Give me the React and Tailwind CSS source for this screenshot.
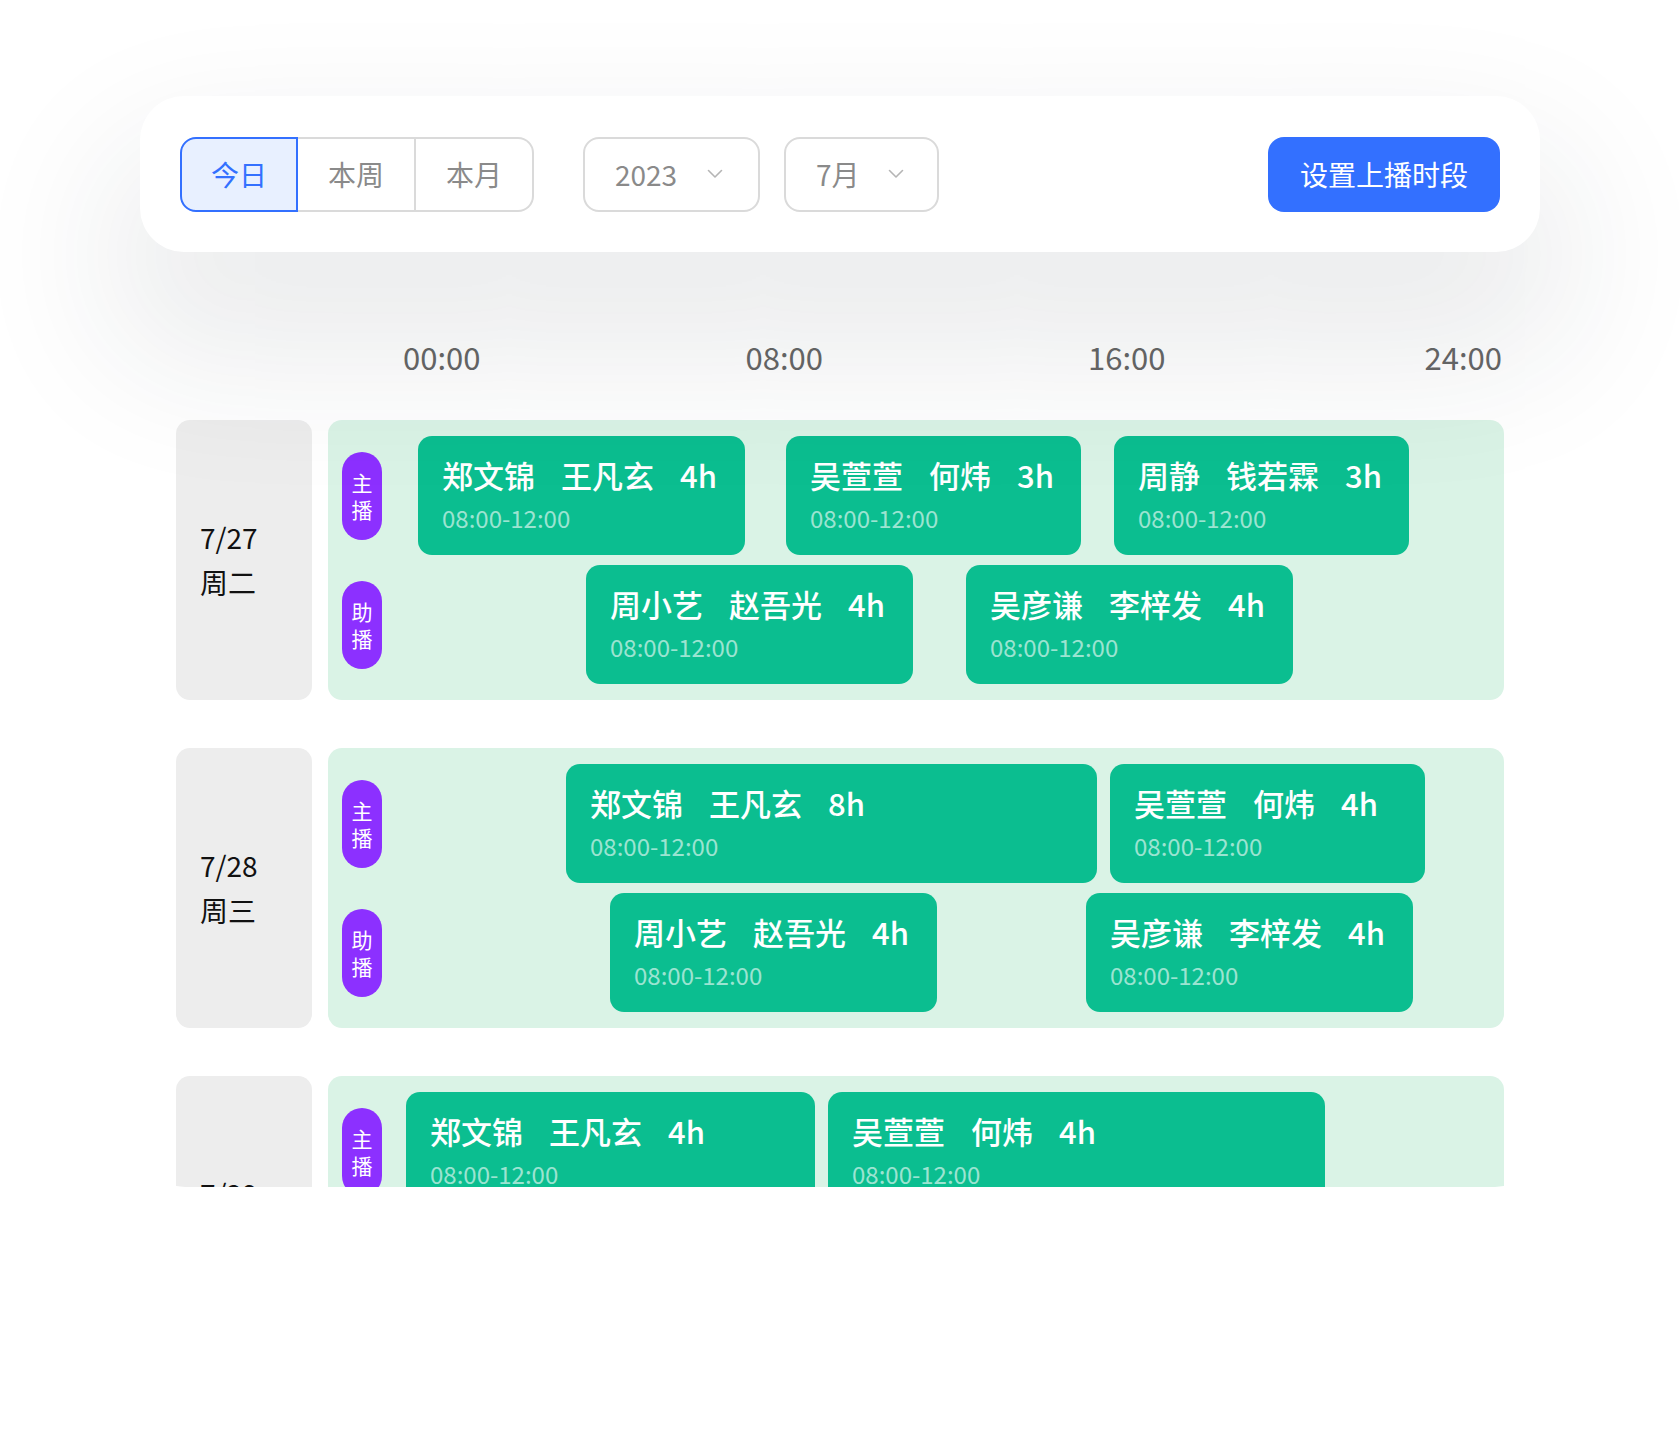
import React from 'react'

const days = [
  {
    date: '7/27',
    week: '周二',
    lanes: [
      {
        role: '主播',
        items: [
          { left: 90, width: 327, names: ['郑文锦', '王凡玄'], hours: '4h' },
          { left: 458, width: 295, names: ['吴萱萱', '何炜'], hours: '3h' },
          { left: 786, width: 295, names: ['周静', '钱若霖'], hours: '3h' },
        ],
      },
      {
        role: '助播',
        items: [
          { left: 258, width: 327, names: ['周小艺', '赵吾光'], hours: '4h' },
          { left: 638, width: 327, names: ['吴彦谦', '李梓发'], hours: '4h' },
        ],
      },
    ],
  },
  {
    date: '7/28',
    week: '周三',
    lanes: [
      {
        role: '主播',
        items: [
          { left: 238, width: 531, names: ['郑文锦', '王凡玄'], hours: '8h' },
          { left: 782, width: 315, names: ['吴萱萱', '何炜'], hours: '4h' },
        ],
      },
      {
        role: '助播',
        items: [
          { left: 282, width: 327, names: ['周小艺', '赵吾光'], hours: '4h' },
          { left: 758, width: 327, names: ['吴彦谦', '李梓发'], hours: '4h' },
        ],
      },
    ],
  },
  {
    date: '7/29',
    week: '周四',
    lanes: [
      {
        role: '主播',
        items: [
          { left: 78, width: 409, names: ['郑文锦', '王凡玄'], hours: '4h' },
          { left: 500, width: 497, names: ['吴萱萱', '何炜'], hours: '4h' },
        ],
      },
      {
        role: '助播',
        items: [
          { left: 258, width: 327, names: ['周小艺', '赵吾光'], hours: '4h' },
          { left: 638, width: 327, names: ['吴彦谦', '李梓发'], hours: '4h' },
        ],
      },
    ],
  },
]

function Chevron() {
  return (
    <svg width="16" height="10" viewBox="0 0 16 10" fill="none">
      <polyline points="1.5,1.5 8,8 14.5,1.5" stroke="#b5b5b5" strokeWidth="1.6" strokeLinecap="round" strokeLinejoin="round" />
    </svg>
  )
}

function Block({ item }) {
  return (
    <div
      className="absolute top-0 h-[119px] rounded-[14px] bg-[#0bbe90] pl-[24px] pt-[17px]"
      style={{ left: item.left, width: item.width }}
    >
      <div className="flex gap-[26px] text-[31px] font-medium leading-[44px] text-white">
        {item.names.map((n) => (
          <span key={n}>{n}</span>
        ))}
        <span>{item.hours}</span>
      </div>
      <div className="mt-[4px] text-[24px] leading-[34px] text-white/60">08:00-12:00</div>
    </div>
  )
}

export default function App() {
  return (
    <div className="min-h-[1440px] bg-white pt-[96px] font-['Noto_Sans_CJK_SC','Noto_Sans',sans-serif]">
      {/* Toolbar */}
      <div className="relative z-10 mx-auto flex h-[156px] w-[1400px] items-center justify-between rounded-[44px] bg-white px-10 shadow-[0_80px_150px_30px_rgba(30,40,50,0.09)]">
        <div className="flex items-center gap-[24px]">
          <div className="flex h-[75px] text-[28px]">
            <div className="flex w-[118px] items-center justify-center rounded-l-[16px] border-2 border-[#3370ff] bg-[#e8f0ff] text-[#3370ff]">今日</div>
            <div className="flex w-[118px] items-center justify-center border-y-2 border-r-2 border-[#dadada] text-[#8a8a8a]">本周</div>
            <div className="flex w-[118px] items-center justify-center rounded-r-[16px] border-y-2 border-r-2 border-[#dadada] text-[#8a8a8a]">本月</div>
          </div>
          <div className="ml-[25px] flex h-[75px] w-[177px] items-center gap-[30px] rounded-[16px] border-2 border-[#dadada] pl-[30px] text-[28px] text-[#8a8a8a]">
            <span>2023</span>
            <Chevron />
          </div>
          <div className="flex h-[75px] w-[155px] items-center gap-[28px] rounded-[16px] border-2 border-[#dadada] pl-[30px] text-[28px] text-[#8a8a8a]">
            <span>7月</span>
            <Chevron />
          </div>
        </div>
        <button className="flex h-[75px] w-[232px] items-center justify-center rounded-[16px] bg-[#3370ff] text-[28px] text-white">
          设置上播时段
        </button>
      </div>

      {/* Schedule */}
      <div className="mx-auto mt-[44px] h-[891px] w-[1390px] overflow-hidden rounded-[40px] px-[31px] pt-[40px]">
        <div className="mb-[42px] flex justify-between pl-[227px] pr-[2px] text-[31px] leading-[42px] text-[#666]">
          <span>00:00</span>
          <span className="pl-[6px]">08:00</span>
          <span className="pl-[6px]">16:00</span>
          <span>24:00</span>
        </div>

        <div className="flex flex-col gap-[48px]">
          {days.map((day) => (
            <div key={day.date} className="flex h-[280px] gap-4">
              <div className="flex w-[136px] shrink-0 flex-col justify-center rounded-[14px] bg-[#ededed] pl-[24px] text-[28px] leading-[45px] text-[#111]">
                <span>{day.date}</span>
                <span>{day.week}</span>
              </div>
              <div className="flex flex-1 flex-col gap-[10px] rounded-[14px] bg-[#daf3e6] pt-[16px]">
                {day.lanes.map((lane) => (
                  <div key={lane.role} className="relative flex h-[119px] items-center pl-[14px]">
                    <div className="flex h-[88px] w-[40px] flex-col items-center justify-center rounded-full bg-[#8c30ff] text-[21px] leading-[27px] text-white">
                      <span>{lane.role[0]}</span>
                      <span>{lane.role[1]}</span>
                    </div>
                    {lane.items.map((item, i) => (
                      <Block key={i} item={item} />
                    ))}
                  </div>
                ))}
              </div>
            </div>
          ))}
        </div>
      </div>
    </div>
  )
}
